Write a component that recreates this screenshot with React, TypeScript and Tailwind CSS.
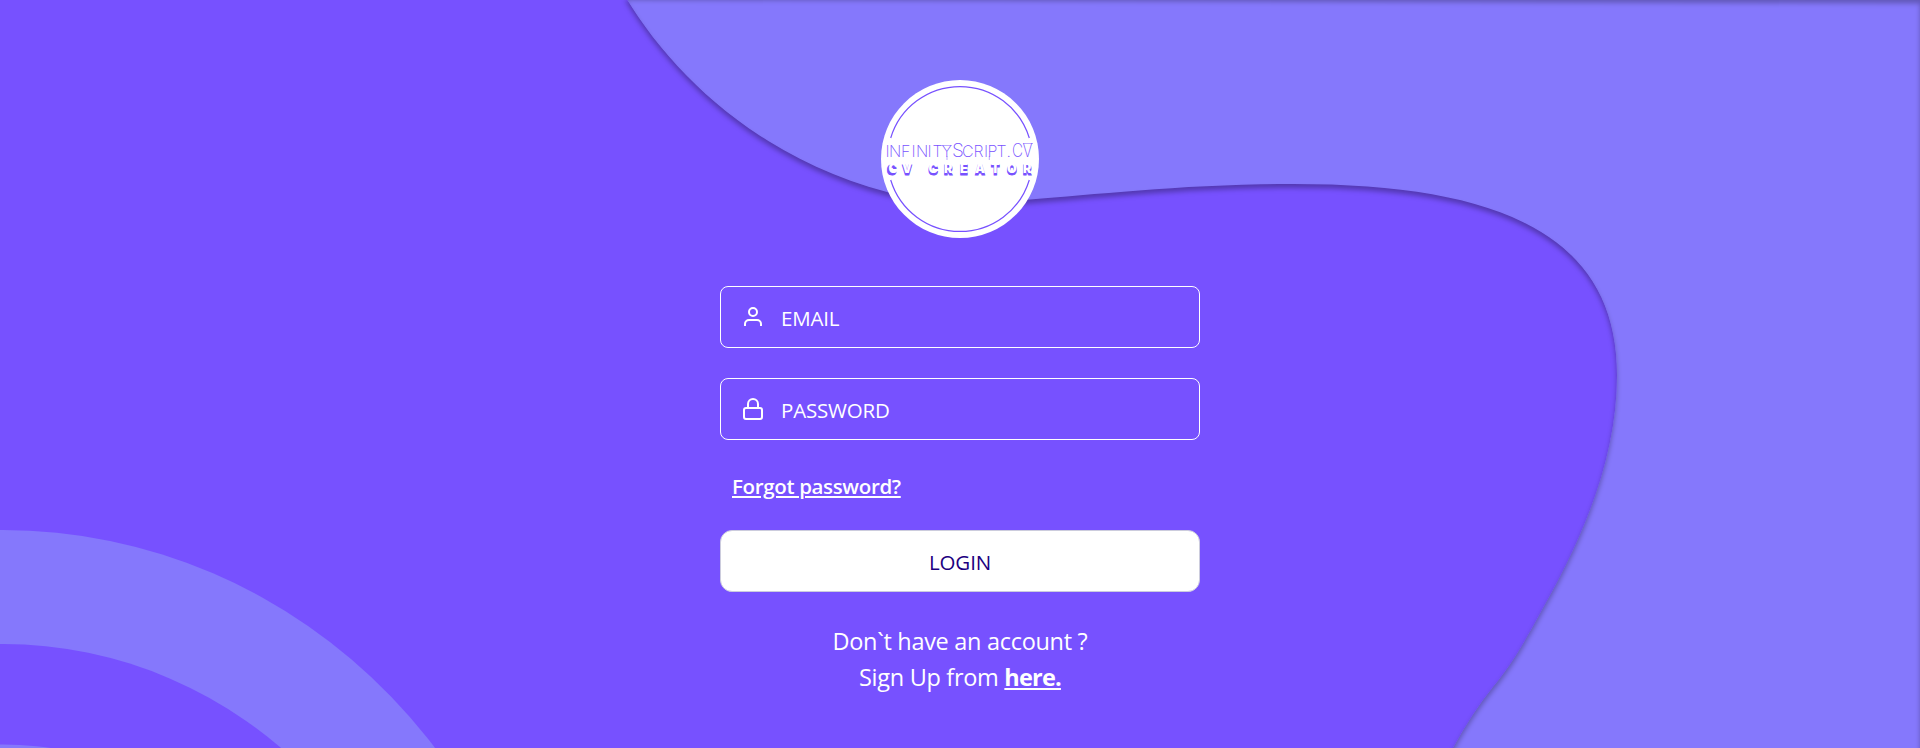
function Backdrop() {
  return (
    <svg className="absolute inset-0 h-[748px] w-[1920px]" viewBox="0 0 1920 748" fill="none" aria-hidden="true">
      <defs>
        <filter id="wave" x="500" y="-60" width="1500" height="900" filterUnits="userSpaceOnUse" colorInterpolationFilters="sRGB">
          <feFlood floodOpacity="0" result="bg" />
          <feColorMatrix in="SourceAlpha" values="0 0 0 0 0 0 0 0 0 0 0 0 0 0 0 0 0 0 1 0" result="alpha" />
          <feOffset in="alpha" dy="4" />
          <feGaussianBlur stdDeviation="2.6" />
          <feColorMatrix values="0 0 0 0 0 0 0 0 0 0 0 0 0 0 0 0 0 0 0.3 0" />
          <feBlend in2="bg" result="drop" />
          <feBlend in="SourceGraphic" in2="drop" result="shape" />
          <feOffset in="alpha" dy="4" />
          <feGaussianBlur stdDeviation="2.6" />
          <feComposite in2="alpha" operator="arithmetic" k2="-1" k3="1" />
          <feColorMatrix values="0 0 0 0 0 0 0 0 0 0 0 0 0 0 0 0 0 0 0.27 0" />
          <feBlend in2="shape" />
        </filter>
      </defs>
      <path
        filter="url(#wave)"
        fill="#8578FC"
        d="M625 -4 L1920 -0.500 V800 H1426 Q1438 774 1453 748 Q1472 713 1493 687 C1513 663 1525 641 1543 608 C1590 525 1617 450 1617 375 C1617 235 1500 184 1294 184 C1184 184 1094 195 1030 199.500 C985 203 940 206 887 192 C765 160 675 80 625 -4 Z"
      />
      <ellipse cx="3" cy="1099" rx="549" ry="569" fill="#8578FC" />
      <ellipse cx="3" cy="1099" rx="437" ry="455" fill="#7751FF" />
      <ellipse cx="3" cy="1099" rx="341" ry="354.500" fill="#8578FC" />
    </svg>
  );
}

function Logo() {
  const xs = "887 902 917 928.500 944 960 975 991 1007 1023";
  return (
    <svg className="size-[158px] shrink-0" viewBox="881 80 158 158" role="img">
      <circle cx="960" cy="159" r="79" fill="#fff" />
      <g fill="none" stroke="#7751FF" strokeWidth="1.200">
        <path d="M890.700 138 A72.400 72.400 0 0 1 1029.300 138" />
        <path d="M890.700 180 A72.400 72.400 0 0 0 1029.300 180" />
      </g>
      <text
        y="157"
        x="885.500 889 901 911.500 916 927.500 932.500 941.500 952 962 973.500 984 987.500 996.500 1006.500"
        fill="#7751FF"
        className="font-[Inter] font-extralight"
        fontSize="16"
      >
        INFINITY<tspan fontSize="19">S</tspan>CRIPT.
      </text>
      <text y="157" x="1012 1022.500" fill="#7751FF" className="font-[Inter] font-extralight" fontSize="19" textLength="21" lengthAdjust="spacingAndGlyphs">CV</text>
      <g stroke="#7751FF" strokeWidth="0.700" opacity="0.700">
        <path d="M942.500 145.500 H951.500 M947 156 V160" />
        <path d="M1023.500 143.500 H1033 M989.300 156 V160" />
      </g>
      <g className="font-[Inter] font-black" fontSize="12.500">
        <text x={xs} y="174.600" fill="#7751FF" stroke="#7751FF" strokeWidth="0.900">CV CREATOR</text>
        <text x={xs} y="173.200" dx="1.600" fill="#fff" aria-hidden="true">CV CREATOR</text>
      </g>
    </svg>
  );
}

const icon = "size-6 shrink-0 fill-none stroke-white stroke-2";
const input =
  "ml-4 h-full w-[400px] bg-transparent pt-0.5 text-[20.5px] font-medium tracking-[-0.2px] outline-none placeholder:text-white placeholder:opacity-100";

export default function App() {
  return (
    <main className="relative h-[748px] w-full overflow-hidden bg-[#7751FF] font-['Open_Sans','Noto_Sans',sans-serif] text-white">
      <Backdrop />
      <div className="relative mx-auto flex w-[480px] flex-col items-center pt-20">
        <Logo />
        <form className="mt-12 flex w-full flex-col">
          <label className="flex h-[62px] items-center rounded-lg border border-white pl-5">
            <svg className={icon} viewBox="0 0 24 24">
              <path d="M20 21v-2a4 4 0 0 0-4-4H8a4 4 0 0 0-4 4v2" />
              <circle cx="12" cy="7" r="4" />
            </svg>
            <input type="text" placeholder="EMAIL" className={input} />
          </label>
          <label className="mt-[30px] flex h-[62px] items-center rounded-lg border border-white pl-5">
            <svg className={icon} viewBox="0 0 24 24">
              <rect x="3" y="11" width="18" height="11" rx="2" />
              <path d="M7 11V7a5 5 0 0 1 10 0v4" />
            </svg>
            <input type="password" placeholder="PASSWORD" className={input} />
          </label>
          <a href="#" className="mt-[31px] ml-3 self-start text-[20.5px] leading-[30px] font-semibold tracking-[-0.35px] underline decoration-2 underline-offset-2">Forgot password?</a>
          <button type="button" className="mt-[29px] h-[62px] rounded-xl border border-[#ccccdd] bg-white pt-0.5 text-[20.5px] font-medium tracking-[-0.1px] text-[#1c0080]">LOGIN</button>
        </form>
        <p className="mt-[31px] text-center text-[23.5px] leading-9 tracking-[-0.3px]">
          Don`t have an account ?<br />
          Sign Up from <a href="#" className="font-bold tracking-[-0.8px] underline decoration-2 underline-offset-2">here.</a>
        </p>
      </div>
    </main>
  );
}
